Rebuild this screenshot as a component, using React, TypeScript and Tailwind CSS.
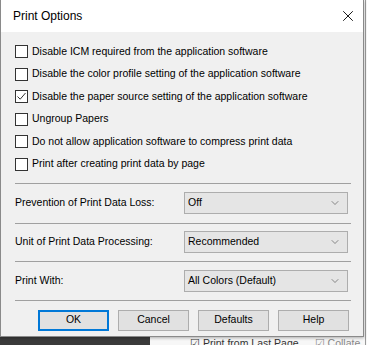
import { ChevronDown, X } from "lucide-react";

const options = [
  { label: "Disable ICM required from the application software", checked: false },
  { label: "Disable the color profile setting of the application software", checked: false },
  { label: "Disable the paper source setting of the application software", checked: true },
  { label: "Ungroup Papers", checked: false },
  { label: "Do not allow application software to compress print data", checked: false },
  { label: "Print after creating print data by page", checked: false },
];

const combos = [
  { label: "Prevention of Print Data Loss:", value: "Off", h: "h-[39px]" },
  { label: "Unit of Print Data Processing:", value: "Recommended", h: "h-[37px]" },
  { label: "Print With:", value: "All Colors (Default)", h: "h-[38px]" },
];

function Checkbox({ checked }: { checked: boolean }) {
  return (
    <span className="flex h-[13px] w-[13px] shrink-0 items-center justify-center border border-[#333333] bg-white">
      {checked && (
        <svg width="11" height="11" viewBox="0 0 11 11">
          <path d="M1.5 5.5 L4.2 8.2 L9.5 2" fill="none" stroke="#333333" strokeWidth="1" />
        </svg>
      )}
    </span>
  );
}

function Button({ label, active }: { label: string; active?: boolean }) {
  return (
    <div
      className={`flex h-[21px] w-[73px] items-center justify-center bg-[#e1e1e1] text-[10.5px] text-black ${
        active ? "border-2 border-[#0078d7]" : "border border-[#adadad]"
      }`}
    >
      {label}
    </div>
  );
}

export default function App() {
  return (
    <div
      className="relative h-[345px] w-[367px] overflow-hidden bg-[#f7f7f7]"
      style={{ fontFamily: '"Liberation Sans", Arial, sans-serif' }}
    >
      <div className="absolute right-[1px] top-0 h-full w-px bg-[#9a9a9a]" />
      <div className="absolute left-[190px] top-[337px] flex items-center gap-1 text-[10.5px] leading-[12px] text-[#333]">
        <span>☑ Print from Last Page</span>
        <span className="ml-3 text-[#888]">☑ Collate</span>
      </div>
      <div className="absolute bottom-0 left-0 h-[8px] w-[150px] bg-[#3a3a3a]" />

      <div className="relative z-10 flex h-[337px] w-[364px] flex-col border-x border-b border-[#8a8a8a] bg-[#f0f0f0] shadow-[0_1px_3px_rgba(0,0,0,0.3)]">
        <div className="flex h-[32px] shrink-0 items-center justify-between bg-white pl-[12px] pr-[6px]">
          <span className="text-[12px] text-black">Print Options</span>
          <X size={18} strokeWidth={1.2} className="text-black" />
        </div>

        <div className="flex flex-col px-[14px] pt-[13px]">
          <div className="flex flex-col gap-[9.5px]">
            {options.map((o) => (
              <div key={o.label} className="flex h-[13px] items-center gap-[4px] text-[10.5px] text-black">
                <Checkbox checked={o.checked} />
                <span className="whitespace-nowrap">{o.label}</span>
              </div>
            ))}
          </div>

          <div className="mt-[12px] h-px w-[336px] bg-[#a0a0a0]" />

          {combos.map((c) => (
            <div key={c.label} className="flex flex-col">
              <div className={`flex ${c.h} items-center justify-between pr-[1px]`}>
                <span className="text-[10.5px] text-black">{c.label}</span>
                <div className="flex h-[22px] w-[164px] items-center justify-between border border-[#adadad] bg-[#e5e5e5] pl-[3px] pr-[6px] text-[10.5px] text-black">
                  <span>{c.value}</span>
                  <ChevronDown size={12} strokeWidth={1.2} className="text-[#444]" />
                </div>
              </div>
              <div className="h-px w-[336px] bg-[#a0a0a0]" />
            </div>
          ))}

          <div className="mt-[9px] flex gap-[9px] pl-[23px]">
            <Button label="OK" active />
            <Button label="Cancel" />
            <Button label="Defaults" />
            <Button label="Help" />
          </div>
        </div>
      </div>
    </div>
  );
}
